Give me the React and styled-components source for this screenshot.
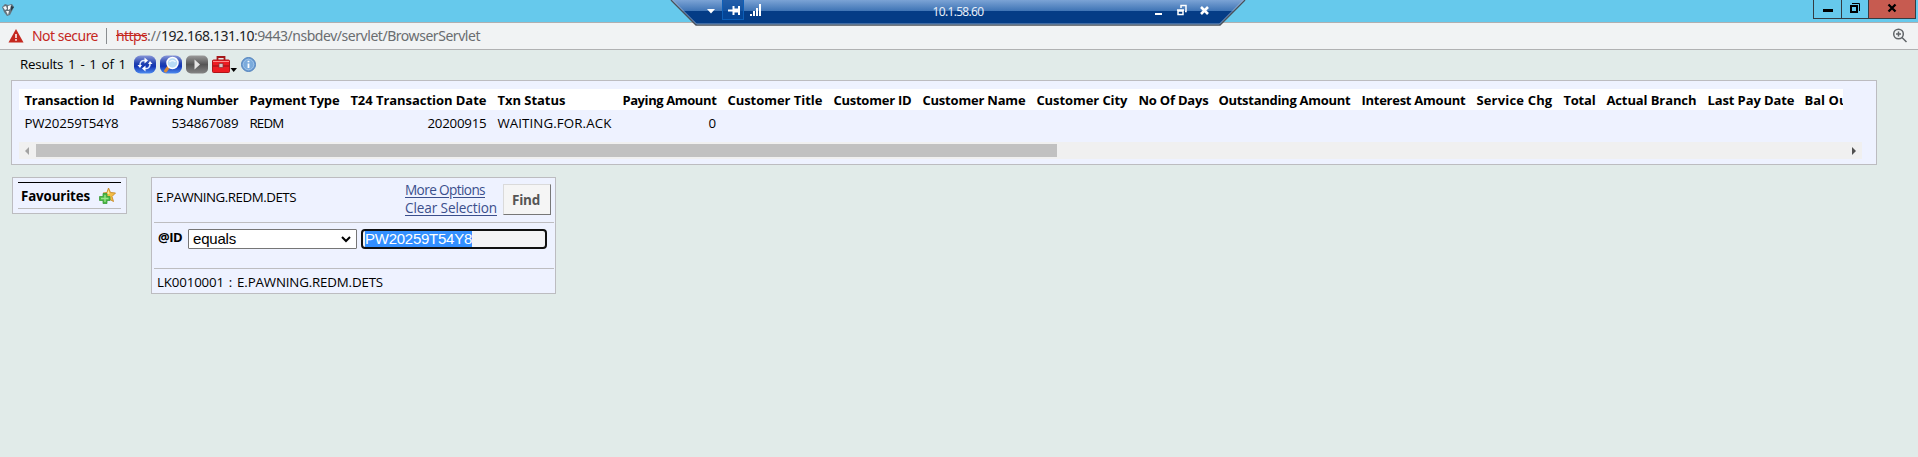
import React, { useLayoutEffect, useRef } from "react";
import styled, { createGlobalStyle, css } from "styled-components";

const GlobalStyle = createGlobalStyle`
  * { box-sizing: border-box; }
  body { margin: 0; background: #e1ebe9; overflow: hidden; }
`;

const ui = `"Noto Sans", "Open Sans", sans-serif`;
const page = `"Trebuchet MS", "Open Sans", sans-serif`;

const Label = styled.span`
  display: inline-block;
  flex: none;
  white-space: pre;
`;

/* Text tracked so that it fills a given column width. */
function Fit({ w, children, ...rest }) {
  const ref = useRef(null);
  useLayoutEffect(() => {
    const el = ref.current;
    el.style.letterSpacing = "0px";
    const natural = el.getBoundingClientRect().width;
    el.style.letterSpacing = `${(w - natural) / el.textContent.length}px`;
  }, [w, children]);
  return <Label ref={ref} {...rest}>{children}</Label>;
}

const Spaced = styled(Fit)`word-spacing: 1.6px;`;

const Screen = styled.div`
  width: 1918px;
  height: 457px;
  background: #e1ebe9;
  font-family: ${page};
  font-size: 13.3px;
  color: #000;
  overflow: hidden;
`;

const TitleBar = styled.header`
  display: flex;
  justify-content: space-between;
  align-items: flex-start;
  height: 23px;
  background: #66c9ec;
  border-bottom: 1px solid #b0afb0;
  padding: 0 2px;
`;

const Favicon = styled.svg`margin-top: 3px;`;

const WindowButtons = styled.div`
  display: flex;
  height: 19px;
  border: solid #343c42;
  border-width: 0 1px 1px;
`;

const WindowButton = styled.div`
  width: ${(p) => p.$w}px;
  height: 18px;
  background: ${(p) => (p.$close ? "#c75b50" : "transparent")};
  & + & { border-left: 1px solid #343c42; }
  svg { display: block; margin: 0 auto; }
`;

const RemoteBar = styled.div`
  position: absolute;
  top: 0;
  left: 670px;
  width: 576px;
  height: 26px;
`;
const RemoteShape = styled.svg`position: absolute; inset: 0;`;
const RemoteContent = styled.div`
  position: relative;
  display: flex;
  height: 24px;
  padding: 0 34px 0 36px;
  justify-content: space-between;
  color: #e6eef8;
  font: 12px/23px ${ui};
`;
const Address = styled(Fit)`margin-right: 4px;`;

const AddressBar = styled.div`
  display: flex;
  align-items: center;
  height: 27px;
  background: #f1f3f4;
  border-bottom: 1px solid #b0b1b2;
  padding: 0 9px 0 8px;
  font: 14px/26px ${ui};
  color: #6a6d70;
`;
const Warning = styled(Fit)`color: #c5281f; margin-left: 8px;`;
const Separator = styled.i`
  width: 1px;
  height: 16px;
  background: #8a8d90;
  margin: 0 9px 0 8px;
`;
const Struck = styled(Fit)`color: #c5281f; text-decoration: line-through;`;
const Host = styled(Fit)`color: #202124;`;
const ZoomIcon = styled.svg`margin-left: auto;`;

const Toolbar = styled.div`
  display: flex;
  align-items: center;
  height: 30px;
  padding: 0 0 2px 20px;
  line-height: 20px;
`;
const Tools = styled.div`
  display: flex;
  align-items: center;
  gap: 4px;
  margin-left: 8px;
  svg { display: block; }
`;

const Panel = styled.section`
  background: #eef2ff;
  border: 1px solid #bcbcc0;
`;

const Results = styled(Panel)`
  width: 1866px;
  height: 85px;
  margin-left: 11px;
  padding: 8px 7px;
`;

const Row = styled.div`
  display: grid;
  grid-template-columns: 94px 109px 90px 136px 114px 94px 95px 78px 103px 91px 69px 132px 104px 76px 32px 90px 86px 110px;
  column-gap: 11px;
  width: 1824px;
  height: ${(p) => (p.$head ? 21 : 32)}px;
  line-height: ${(p) => (p.$head ? 22 : 26)}px;
  padding-left: 5.4px;
  overflow: hidden;
  ${(p) => p.$head && css`background: #fff; font-weight: 700; font-size: 13px;`}
`;
const Cell = styled.div`
  text-align: ${(p) => (p.$right ? "right" : "left")};
  white-space: nowrap;
`;

const ScrollBar = styled.div`
  display: flex;
  align-items: center;
  width: 1843px;
  height: 17px;
  background: #f0f0f0;
`;
const ScrollArrow = styled.svg`width: 17px; height: 17px; flex: none;`;
const Track = styled.div`flex: 1; height: 13px;`;
const Thumb = styled.div`width: 1021px; height: 13px; background: #c1c1c1;`;

const Lower = styled.main`
  display: flex;
  align-items: flex-start;
  gap: 24px;
  padding: 12px 0 0 12px;
`;

const Favourites = styled(Panel)`
  width: 115px;
  height: 37px;
  padding: 4px 5px 5px 5px;
`;
const FavouritesRow = styled.div`
  display: flex;
  align-items: center;
  justify-content: space-between;
  height: 27px;
  border-top: 1px solid #000;
  border-bottom: 1px solid #bdbdbd;
  padding: 0 5px 0 3px;
  font-weight: 700;
`;

const Search = styled(Panel)`
  width: 405px;
  height: 117px;
  padding: 0 1px 0 2px;
`;
const SearchHead = styled.div`
  display: flex;
  height: 45px;
  border-bottom: 1px solid #bdbdc0;
  padding: 6px 3px 0 2px;
`;
const SearchTitle = styled.div`line-height: 27px; width: 249px;`;
const Links = styled.nav`
  display: flex;
  flex-direction: column;
  width: 98px;
  line-height: 18px;
  margin-top: -3px;
  font-size: 13.6px;
`;
const Link = styled(Fit)`
  align-self: flex-start;
  color: #3b4f8c;
  text-decoration: underline;
  text-underline-offset: 2px;
`;
const FindButton = styled.button`
  width: 48px;
  height: 31px;
  padding: 0 2px 0 0;
  background: #f5f5f5;
  border: 1px solid;
  border-color: #dadada #777 #777 #dadada;
  font: 700 13.5px/26px ${page};
  color: #555;
`;
const Criteria = styled.div`
  display: flex;
  height: 46px;
  border-bottom: 1px solid #bdbdc0;
  padding: 6px 0 0 4px;
`;
const FieldName = styled.div`
  width: 30px;
  font-weight: 700;
  font-size: 13px;
  line-height: 17px;
`;
const fieldFont = `15px/18px "Liberation Sans", Arial, sans-serif`;
const Select = styled.div`
  display: flex;
  align-items: center;
  justify-content: space-between;
  width: 169px;
  height: 20px;
  border: 1px solid #767676;
  border-radius: 1px;
  background: #fff;
  font: ${fieldFont};
  padding: 0 5px 0 4px;
`;
const Input = styled.div`
  width: 186px;
  height: 20px;
  margin-left: 4px;
  border: 2px solid #101010;
  border-radius: 4px;
  background: #f3f3f5;
  font: ${fieldFont};
  line-height: 16px;
  padding-left: 2px;
`;
const Selected = styled(Fit)`
  background: #338fff;
  color: #fff;
  height: 16px;
`;
const SearchFoot = styled.div`padding-left: 3px; line-height: 26px;`;

const columns = [
  ["Transaction Id", 90, "PW20259T54Y8", 94],
  ["Pawning Number", 109, "534867089", 67, true],
  ["Payment Type", 90, "REDM", 34],
  ["T24 Transaction Date", 136, "20200915", 59, true],
  ["Txn Status", 68, "WAITING.FOR.ACK", 114],
  ["Paying Amount", 94, "0", 8, true],
  ["Customer Title", 95],
  ["Customer ID", 78],
  ["Customer Name", 103],
  ["Customer City", 91],
  ["No Of Days", 70],
  ["Outstanding Amount", 132],
  ["Interest Amount", 104],
  ["Service Chg", 76],
  ["Total", 32],
  ["Actual Branch", 90],
  ["Last Pay Date", 87],
  ["Bal Outstanding", 106],
];

function RemoteSession() {
  return (
    <RemoteBar>
      <RemoteShape width="576" height="26" viewBox="0 0 576 26">
        <defs>
          <linearGradient id="session" x1="0" y1="0" x2="0" y2="1">
            <stop offset="0" stopColor="#7ba3d5" />
            <stop offset=".44" stopColor="#3f74b5" />
            <stop offset=".44" stopColor="#043c86" />
            <stop offset="1" stopColor="#043c86" />
          </linearGradient>
        </defs>
        <path d="M1 0H575L550 25H26Z" fill="url(#session)" />
        <path d="M1 0L26 25H550L575 0" fill="none" stroke="#4a5058" strokeWidth="1.400" />
        <path d="M2.500 0L26.500 24H549.500L573.500 0" fill="none" stroke="#9fb6d3" strokeWidth=".8" />
      </RemoteShape>
      <RemoteContent>
        <svg width="60" height="24" viewBox="0 0 60 24">
          <path d="M1 9H9L5 13.500Z" fill="#fff" />
          <rect x="16.500" y="-.5" width="21" height="20" fill="#06489b" fillOpacity=".75" stroke="#0d5fb8" />
          <path d="M22 10.500H27M27.500 6V15M28 9.500H33M28 11.500H33M33 6V15" fill="none" stroke="#fff" strokeWidth="2" />
          <path d="M45 14V16M48 11V16M51 8V16M54 4V16" stroke="#fff" strokeWidth="2" />
        </svg>
        <Address w={51}>10.1.58.60</Address>
        <svg width="58" height="24" viewBox="0 0 58 24">
          <path d="M1 14H8" stroke="#fff" strokeWidth="2" />
          <path d="M24 11H29V14.500H24ZM23 10H30M27 8V5.500H32V11.500H31" fill="none" stroke="#fff" strokeWidth="1.500" />
          <path d="M47 7L54 14M54 7L47 14" stroke="#fff" strokeWidth="2.600" />
        </svg>
      </RemoteContent>
    </RemoteBar>
  );
}

function ToolIcons() {
  return (
    <Tools>
      <svg width="22" height="19" viewBox="0 0 22 19">
        <defs>
          <linearGradient id="blue" x1="0" y1="0" x2="0" y2="1">
            <stop stopColor="#8796d8" /><stop offset=".45" stopColor="#1f40b0" />
            <stop offset=".6" stopColor="#1235b4" /><stop offset="1" stopColor="#4d8bf0" />
          </linearGradient>
          <linearGradient id="gray" x1="0" y1="0" x2="0" y2="1">
            <stop stopColor="#9b9b9b" /><stop offset=".5" stopColor="#555" /><stop offset="1" stopColor="#858585" />
          </linearGradient>
        </defs>
        <rect y=".5" width="22" height="18" rx="6.500" fill="url(#blue)" />
        <path d="M6 11C5.500 7 8 5 11 5.500M16 8C16.500 12 14 14 11 13.500" stroke="#dfe8ff" strokeWidth="1.500" fill="none" />
        <path d="M10.500 2.500L14 5.500L10.500 8.500ZM11.500 10.500L8 13.500L11.500 16.500ZM3.500 10H8L6 13ZM14 9H18.500L16 6Z" fill="#fff" />
      </svg>
      <svg width="22" height="19" viewBox="0 0 22 19">
        <rect y=".5" width="22" height="18" rx="6.500" fill="url(#blue)" />
        <path d="M8.500 12L5.500 16" stroke="#d98b3a" strokeWidth="3" strokeLinecap="round" />
        <circle cx="12.500" cy="8" r="5.500" fill="#b8dcf6" stroke="#fff" strokeWidth="1.500" />
        <path d="M9.500 7Q12.500 4 15.500 7" stroke="#edf7ff" fill="none" strokeWidth="1.500" />
      </svg>
      <svg width="22" height="19" viewBox="0 0 22 19">
        <rect y=".5" width="22" height="18" rx="5" fill="url(#gray)" />
        <path d="M8.500 4.500L14 9.500L8.500 14.500Z" fill="#e5e5e5" />
      </svg>
      <svg width="25" height="19" viewBox="0 0 25 19">
        <path d="M5.500 6V2H12.500V6" fill="none" stroke="#a5171b" strokeWidth="1.800" />
        <rect x=".5" y="5" width="17" height="12.500" rx="1" fill="#ee1c22" stroke="#b01418" />
        <path d="M1 6.500H17" stroke="#ff8a8a" /><path d="M1 11H17" stroke="#8f1216" />
        <rect x="7" y="8.500" width="4" height="4" fill="#d8c8c8" stroke="#8d3335" strokeWidth=".7" />
        <path d="M18.500 13H25L21.700 17Z" fill="#000" />
      </svg>
      <svg width="15" height="17" viewBox="0 0 15 17">
        <circle cx="7.500" cy="8.500" r="7" fill="#699bd2" stroke="#5483bd" />
        <circle cx="7.500" cy="8.500" r="5.300" fill="#7babdc" stroke="#a9caec" strokeWidth=".8" />
        <path d="M7.500 7.500V12M7.500 4.700V6.300" stroke="#fff" strokeWidth="1.800" />
      </svg>
    </Tools>
  );
}

export default function App() {
  return (
    <Screen>
      <GlobalStyle />
      <TitleBar>
        <Favicon width="13" height="14" viewBox="0 0 13 14">
          <path d="M0 4L3 1L6 2L10 1L12 4L10 8L8 12L5 13L2 9Z" fill="#64747e" />
          <path d="M1 4L4 3L5 6L3 7ZM6 3L9 2L8 6L6 7ZM4 8L7 8L6 12Z" fill="#f5f8fa" />
          <path d="M9 3L12 4L9 8Z" fill="#263c49" />
        </Favicon>
        <WindowButtons>
          <WindowButton $w={27}>
            <svg width="12" height="18"><path d="M1 10.500H11" stroke="#000" strokeWidth="3" /></svg>
          </WindowButton>
          <WindowButton $w={27}>
            <svg width="12" height="18"><path d="M2 6H8V12H2Z" fill="none" stroke="#000" strokeWidth="2" /><path d="M3 3.500H10.500V11" fill="none" stroke="#000" /></svg>
          </WindowButton>
          <WindowButton $w={47} $close>
            <svg width="12" height="18"><path d="M2.500 4.500L9.500 11.500M9.500 4.500L2.500 11.500" stroke="#000" strokeWidth="2.300" /></svg>
          </WindowButton>
        </WindowButtons>
      </TitleBar>
      <RemoteSession />
      <AddressBar>
        <svg width="16" height="14" viewBox="0 0 16 14">
          <path d="M8 0L15.500 13.500H.5Z" fill="#c5281f" />
          <path d="M8 5V9M8 10V11.700" stroke="#fff" strokeWidth="1.500" />
        </svg>
        <Warning w={66}>Not secure</Warning>
        <Separator />
        <Struck w={31}>https</Struck>
        <Fit w={14}>://</Fit>
        <Host w={93}>192.168.131.10</Host>
        <Fit w={226}>:9443/nsbdev/servlet/BrowserServlet</Fit>
        <ZoomIcon width="17" height="16" viewBox="0 0 17 16">
          <circle cx="6.500" cy="6" r="4.800" fill="none" stroke="#606468" strokeWidth="1.500" />
          <path d="M4 6H9M6.500 3.500V8.500M10 9.500L14.500 14" stroke="#606468" strokeWidth="1.500" />
        </ZoomIcon>
      </AddressBar>
      <Toolbar>
        <Spaced w={106}>Results 1 - 1 of 1</Spaced>
        <ToolIcons />
      </Toolbar>
      <Results>
        <Row $head>
          {columns.map(([name, w]) => <Cell key={name}><Fit w={w}>{name}</Fit></Cell>)}
        </Row>
        <Row>
          {columns.map(([name, , value, w, right]) => (
            <Cell key={name} $right={right}>{value && <Fit w={w}>{value}</Fit>}</Cell>
          ))}
        </Row>
        <ScrollBar>
          <ScrollArrow viewBox="0 0 17 17"><path d="M10 5V13L6 9Z" fill="#a3a3a3" /></ScrollArrow>
          <Track><Thumb /></Track>
          <ScrollArrow viewBox="0 0 17 17"><path d="M7 5V13L11 9Z" fill="#505050" /></ScrollArrow>
        </ScrollBar>
      </Results>
      <Lower>
        <Favourites>
          <FavouritesRow>
            <Fit w={69}>Favourites</Fit>
            <svg width="17" height="16" viewBox="0 0 17 16">
              <path d="M9.500 0L11.500 4.500L16.500 5L13 8.500L14.500 13.500L10 11L6 13L7 8L4 5L8 4.500Z" fill="#f5bd45" stroke="#c98a25" strokeWidth=".9" />
              <path d="M9.500 2L10.500 6L8 6Z" fill="#ffe9a0" />
              <path d="M4 5.500H8V8.500H11V12.500H8V15.500H4V12.500H.5V8.500H4Z" fill="#4bb944" stroke="#3a9c3a" strokeWidth=".8" />
              <path d="M6 7V14M2 10.500H9.500" stroke="#9be48b" strokeWidth="1.300" />
            </svg>
          </FavouritesRow>
        </Favourites>
        <Search>
          <SearchHead>
            <SearchTitle><Fit w={140}>E.PAWNING.REDM.DETS</Fit></SearchTitle>
            <Links>
              <Link w={80}>More Options</Link>
              <Link w={92}>Clear Selection</Link>
            </Links>
            <FindButton><Fit w={28}>Find</Fit></FindButton>
          </SearchHead>
          <Criteria>
            <FieldName><Fit w={24}>@ID</Fit></FieldName>
            <Select>
              <Fit w={43}>equals</Fit>
              <svg width="10" height="7" viewBox="0 0 10 7"><path d="M1 1L5 5L9 1" fill="none" stroke="#000" strokeWidth="2" /></svg>
            </Select>
            <Input><Selected w={107}>PW20259T54Y8</Selected></Input>
          </Criteria>
          <SearchFoot><Spaced w={226}>LK0010001 : E.PAWNING.REDM.DETS</Spaced></SearchFoot>
        </Search>
      </Lower>
    </Screen>
  );
}
